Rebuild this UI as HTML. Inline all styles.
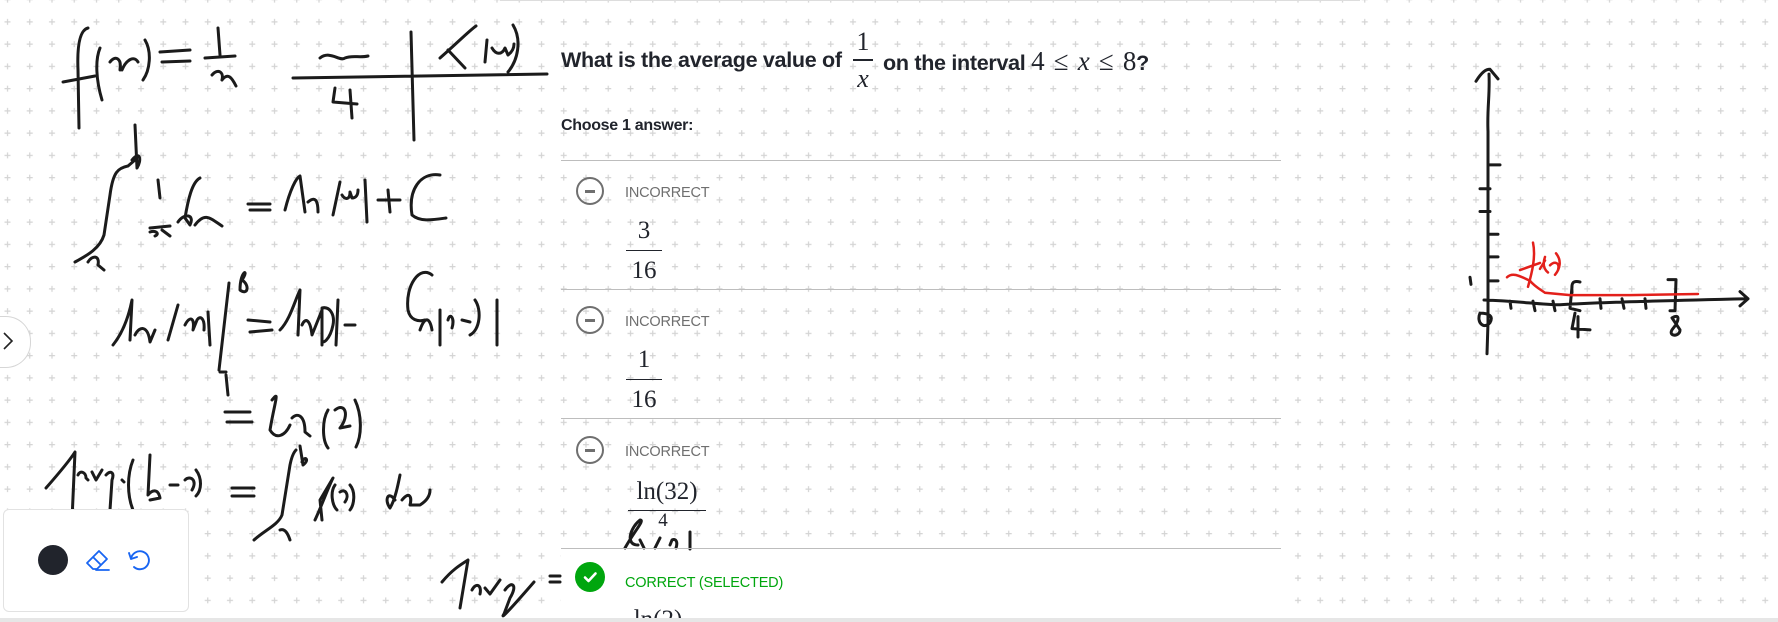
<!DOCTYPE html>
<html><head><meta charset="utf-8"><style>
html,body{margin:0;padding:0;width:1778px;height:622px;overflow:hidden;background:#fff;font-family:"Liberation Sans",sans-serif}
.abs{position:absolute}
.serif{font-family:"Liberation Serif",serif}
.inc{position:absolute;left:625px;font-size:14.5px;color:#6f6f6f;letter-spacing:-0.2px}
.frac{position:absolute;text-align:center;font-family:"Liberation Serif",serif;font-size:25px;color:#21242c}
.hr{position:absolute;left:561px;width:720px;height:1px;background:#bdbdbd}
.ic{position:absolute;width:24px;height:24px;border:2px solid #6f6f6f;border-radius:50%}
.ic:after{content:"";position:absolute;left:7px;top:11px;width:10px;height:2.5px;background:#6f6f6f}
</style></head><body>
<svg class="abs" style="left:0;top:0" width="1778" height="622">
<defs><pattern id="g" x="18.25" y="10.4" width="22.25" height="22.25" patternUnits="userSpaceOnUse">
<path d="M11.5 8.5V14.5M8.5 11.5H14.5" stroke="#d4d4d4" stroke-width="1.2"/>
</pattern></defs>
<rect width="1778" height="622" fill="url(#g)"/>
<rect x="561" y="549" width="720" height="73" fill="#fff"/>
<line x1="500" y1="0.5" x2="1360" y2="0.5" stroke="#ddd"/>
<rect x="0" y="618" width="1778" height="4" fill="#e6e6e6"/>
<g fill="none" stroke="#1b1b1b" stroke-width="3" stroke-linecap="round" stroke-linejoin="round">
<path d="M79 128 L78 70 C77 45 80 30 88 28 M63 82 L95 76 M100 48 C95 60 96 80 102 100 M110 62 C115 55 122 58 120 70 M122 70 C126 60 134 55 138 62 M145 40 C152 52 150 70 143 80 M160 52 L190 50 M162 62 L190 61 M218 28 L220 55 M205 58 L235 56 M212 75 C218 68 224 72 222 80 M222 80 C228 72 232 78 236 86"/>
<path d="M320 58 C330 50 340 62 345 58 C352 55 360 58 368 56 M293 78 L547 74 M335 88 L333 102 L357 104 M350 90 L352 118 M411 32 L414 140 M440 58 C455 45 470 30 476 26 M448 50 L465 68 M487 40 L485 62 M492 48 C496 55 502 55 505 48 L508 55 C512 52 514 48 514 44 M513 25 C522 40 518 60 508 72"/>
<path d="M75 262 C88 255 100 248 104 235 L110 195 C113 172 118 168 128 166 L135 160 M135 125 L137 168 C142 160 140 150 132 160 M88 262 C92 255 100 255 98 265 L104 270 M158 180 L160 198 M150 228 L170 226 M150 232 C156 230 160 234 155 236 M162 230 L170 236 M178 222 C185 212 195 215 190 225 L185 218 C188 200 192 182 200 178 M195 225 C205 212 210 218 222 226 M248 204 L270 204 M250 210 L270 210 M285 210 C290 190 296 178 300 176 L305 212 M308 202 C315 196 318 200 318 212 M333 215 L340 182 M342 195 C345 200 350 200 350 192 L352 198 C356 198 358 195 358 190 M365 180 L367 222 M378 200 L400 200 M388 190 L390 212 M440 175 C420 172 408 190 412 215 C420 222 432 220 446 218"/>
<path d="M113 345 C125 330 130 310 132 300 L130 340 M135 335 C140 325 148 326 150 342 L155 330 M168 340 L178 305 M185 325 C190 315 195 318 193 330 L197 320 C200 315 205 318 204 330 M208 312 L210 345 M229 283 L219 370 M242 280 C250 268 240 270 240 290 C248 296 250 285 242 280 M226 375 L228 395 M220 372 L226 372 M248 320 L270 322 M250 332 L272 330 M280 330 C290 320 295 300 300 290 L298 335 M302 325 C305 318 310 318 312 335 L322 310 M322 345 L322 308 C330 306 335 315 333 325 C330 340 322 345 322 340 M338 300 L336 345 M345 325 L355 325 M432 275 C420 265 405 285 408 310 C410 320 418 322 425 320 M420 330 C425 315 430 318 432 330 M440 310 L440 345 M448 320 C450 312 455 318 452 328 M462 320 L470 322 M475 300 C482 310 480 330 470 335 M497 300 L497 345"/>
<path d="M225 412 L250 412 M227 422 L252 422 M272 400 C280 390 275 400 270 430 C276 440 285 436 290 425 M292 418 C298 412 305 416 305 432 L310 436 M328 410 C322 420 322 440 328 448 M335 410 C345 402 350 415 340 428 L350 426 M355 400 C362 415 362 435 356 447"/>
<path d="M46 488 C60 472 70 460 75 452 L72 520 M78 475 C80 470 86 472 86 478 L88 480 M92 472 L96 480 L102 470 M106 475 C110 470 115 472 112 480 L110 510 M122 480 L124 482 M133 460 C127 475 127 495 133 510 M150 455 L148 495 C152 490 158 488 160 498 L150 500 M170 485 L178 485 M185 480 C190 475 198 480 192 490 M196 470 C202 478 202 490 196 496 M232 488 L254 488 M232 496 L254 496 M254 540 C265 530 278 525 282 515 L290 465 C292 455 294 452 296 450 M300 446 L303 465 C310 460 305 455 302 462 M280 530 C285 528 288 534 290 540 M315 520 C322 505 328 488 333 478 L320 500 L322 520 M335 485 C330 492 332 505 337 510 M340 492 C345 488 350 495 345 502 M350 485 C356 492 354 505 350 510 M395 500 C388 490 384 500 390 508 C395 500 398 485 400 475 M402 500 C410 490 412 498 410 505 L420 505 C428 500 430 495 430 490"/>
<path d="M442 582 C452 570 460 565 468 560 L460 608 M472 590 C476 582 482 585 480 594 M485 588 L490 594 L500 580 M505 590 C512 580 518 585 510 598 L504 614 C500 620 508 612 534 582 M550 576 L560 576 M550 582 L560 582"/>
<path d="M625 548 C635 530 645 520 640 520 C630 528 625 545 638 545 M640 540 L644 548 M655 548 L660 538 M670 545 L672 540 C676 538 678 542 676 548 M690 532 L690 549"/>
</g>
<g transform="scale(1,1.195)">
<g fill="none" stroke="#1b1b1b" stroke-width="3" stroke-linecap="round" stroke-linejoin="round" vector-effect="non-scaling-stroke">
<path vector-effect="non-scaling-stroke" d="M1487 296 L1488 270 L1488 110 C1487 90 1490 80 1489 62 M1476 68 C1482 60 1486 58 1490 58 C1494 62 1496 64 1498 66 M1488 138 L1500 138 M1480 158 L1490 158 M1480 177 L1490 177 M1488 196 L1498 196 M1488 215 L1498 215 M1488 235 L1498 235 M1470 232 L1471 238 M1484 251 C1520 252 1540 255 1560 255 C1580 254 1640 252 1748 250 M1740 244 L1748 250 L1740 256 M1510 252 L1511 258 M1533 252 L1535 260 M1553 252 L1555 260 M1600 250 L1601 258 M1622 250 L1624 258 M1645 250 L1646 258 M1572 240 L1570 258 L1580 260 M1580 236 C1570 234 1572 240 1572 245 M1668 234 L1676 234 L1675 260 L1670 260 M1480 262 C1476 270 1484 276 1490 270 C1494 264 1488 262 1480 262 M1575 262 L1572 275 L1590 276 M1578 265 L1578 282 M1672 266 C1680 262 1680 268 1672 276 C1668 282 1680 282 1680 276 Z"/>
</g>
<g fill="none" stroke="#e3201b" stroke-width="2.5" stroke-linecap="round">
<path vector-effect="non-scaling-stroke" d="M1507 232 C1512 228 1518 230 1530 235 C1535 240 1540 242 1545 245 L1570 247 L1630 247 L1698 246"/>
<path vector-effect="non-scaling-stroke" d="M1528 240 C1532 228 1536 215 1533 203 M1520 226 L1540 220 M1540 225 L1545 218 M1545 215 C1542 222 1545 226 1548 228 M1550 222 C1555 218 1560 220 1558 226 M1556 212 C1562 218 1560 225 1555 230"/>
</g>
</g>
</svg>

<div class="abs" style="left:0;top:316px;width:30px;height:50px;border:1px solid #d6d6d6;border-left:none;border-radius:0 25px 25px 0;background:#fff"></div>
<svg class="abs" style="left:0;top:330px" width="20" height="22"><path d="M4 3 L12 11 L4 19" fill="none" stroke="#222" stroke-width="1.6"/></svg>

<div class="abs" style="left:3px;top:509px;width:184px;height:101px;background:#fff;border:1px solid #e2e2e2;border-radius:6px"></div>
<div class="abs" style="left:38px;top:545px;width:30px;height:30px;border-radius:50%;background:#21242c"></div>
<svg class="abs" style="left:82px;top:546px" width="30" height="28" fill="none" stroke="#1865f2" stroke-width="1.8" stroke-linejoin="round" stroke-linecap="round">
<path d="M5 17 L17 5 L25 13 L15 23 L11 23 Z M11 11 L19 19 M14 24 L27 24"/></svg>
<svg class="abs" style="left:125px;top:546px" width="28" height="28" fill="none" stroke="#1865f2" stroke-width="1.9" stroke-linecap="round" stroke-linejoin="round">
<path d="M6 13 A9 9 0 1 1 9 21 M4 7 L6 13 L12 11"/></svg>

<div class="abs" style="left:561px;top:48px;font-size:21.5px;font-weight:bold;color:#21242c;white-space:nowrap;letter-spacing:-0.3px">What is the average value of</div>
<div class="frac" style="left:852px;top:28px;width:22px;font-size:26px;line-height:27px">1<div style="height:1.5px;background:#21242c;margin:4px 1px"></div><i>x</i></div>
<div class="abs" style="left:883px;top:46px;font-size:21.5px;font-weight:bold;color:#21242c;white-space:nowrap;letter-spacing:-0.3px">on the interval <span class="serif" style="font-weight:normal;font-size:27px;word-spacing:3px">4 ≤ <i>x</i> ≤ 8</span>?</div>
<div class="abs" style="left:561px;top:117px;font-size:16px;font-weight:bold;color:#21242c;letter-spacing:-0.3px">Choose 1 answer:</div>

<div class="hr" style="top:160px"></div>
<div class="hr" style="top:289px"></div>
<div class="hr" style="top:418px"></div>
<div class="hr" style="top:548px"></div>

<div class="ic" style="left:576px;top:177px"></div>
<div class="inc" style="top:185px">INCORRECT</div>
<div class="frac" style="left:626px;top:215px;width:36px;line-height:31px">3<div style="height:1.3px;background:#21242c;margin:4px 0"></div>16</div>

<div class="ic" style="left:576px;top:306px"></div>
<div class="inc" style="top:314px">INCORRECT</div>
<div class="frac" style="left:626px;top:344px;width:36px;line-height:31px">1<div style="height:1.3px;background:#21242c;margin:4px 0"></div>16</div>

<div class="ic" style="left:576px;top:436px"></div>
<div class="inc" style="top:444px">INCORRECT</div>
<div style="position:absolute;left:628px;top:476px;width:80px;height:72px;overflow:hidden">
<div class="frac" style="left:0;top:0;width:78px;line-height:32px">ln(32)<div style="height:1.3px;background:#21242c;margin:2px 0"></div><span style="position:relative;left:-4px;top:-10px;font-size:19px">4</span></div></div>

<div class="abs" style="left:575px;top:562px;width:30px;height:30px;border-radius:50%;background:#00a60e"></div>
<svg class="abs" style="left:575px;top:562px" width="30" height="30"><path d="M10 15.5 L13.5 19 L20.5 11.5" fill="none" stroke="#fff" stroke-width="2.6" stroke-linecap="round" stroke-linejoin="round"/></svg>
<div class="inc" style="top:575px;color:#00a60e">CORRECT (SELECTED)</div>
<div style="position:absolute;left:628px;top:600px;width:80px;height:18px;overflow:hidden">
<div class="frac" style="left:0;top:4px;width:60px;line-height:32px">ln(2)</div></div>
</body></html>
